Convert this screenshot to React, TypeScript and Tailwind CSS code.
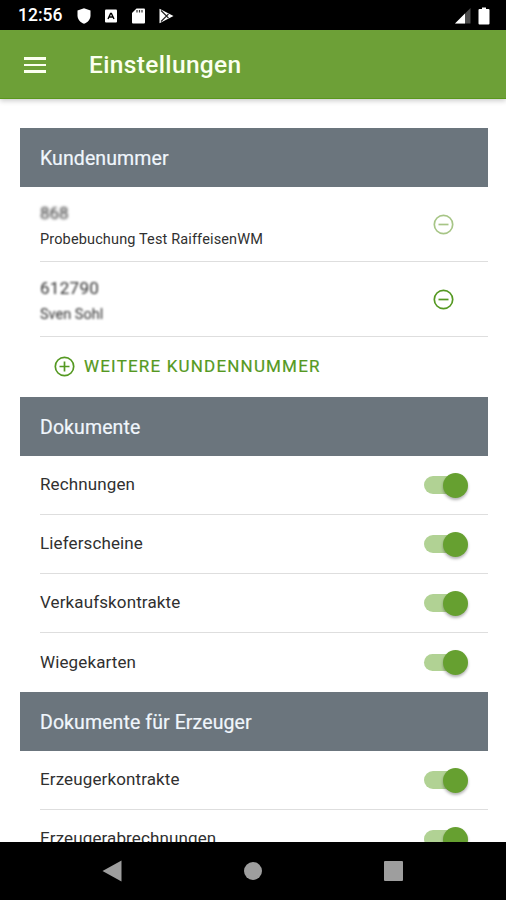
import { useState } from "react";

const DOCUMENTS = ["Rechnungen", "Lieferscheine", "Verkaufskontrakte", "Wiegekarten"];
const PRODUCER_DOCUMENTS = ["Erzeugerkontrakte", "Erzeugerabrechnungen"];

export default function App() {
    return (
        <div className="flex h-[900px] w-[506px] flex-col overflow-hidden bg-white font-['Roboto',sans-serif] text-[#303030]">
            <StatusBar />

            <header className="z-10 flex h-[69px] shrink-0 items-center bg-[#6da037] pt-[2px] pl-[23.5px] text-[#fbfff0] shadow-[inset_0_-1px_0_#5a971c,0_2px_5px_rgba(0,0,0,0.2)]">
                <button aria-label="Menu" className="flex w-[22.5px] flex-col gap-[4px]">
                    <span className="h-[2.5px] w-full bg-current" />
                    <span className="h-[2.5px] w-full bg-current" />
                    <span className="h-[2.5px] w-full bg-current" />
                </button>
                <h1 className="ml-[43px] text-[24.5px] leading-none font-medium tracking-[0.35px]">Einstellungen</h1>
            </header>

            <main className="min-h-0 flex-1 overflow-hidden pt-[29.5px] pr-[18px] pl-5">
                <SectionTitle title="Kundenummer" />
                <div className="ml-5 flex h-[75px] items-center justify-between border-b border-[#dedede] pt-px pr-[34px]">
                    <div className="pt-[3px]">
                        <p className="text-[17px] leading-[26px] blur-[1.4px]">868</p>
                        <p className="mt-px text-[14.5px] leading-[26px] tracking-[0.14px]">Probebuchung Test RaiffeisenWM</p>
                    </div>
                    <CircleIcon className="text-[#6da037] opacity-60" />
                </div>
                <div className="ml-5 flex h-[75px] items-center justify-between border-b border-[#dedede] pt-px pr-[34px]">
                    <div className="pt-[3px]">
                        <p className="text-[17px] leading-[26px] tracking-[0.3px] blur-[1px]">612790</p>
                        <p className="mt-px text-[14.5px] leading-[26px] blur-[1.2px]">Sven Sohl</p>
                    </div>
                    <CircleIcon className="text-[#559922]" />
                </div>
                <button className="ml-[34px] flex h-[59.5px] items-center gap-[9px] text-[#559922]">
                    <CircleIcon plus />
                    <span className="text-[17px] tracking-[1.18px] [-webkit-text-stroke:0.2px]">WEITERE KUNDENNUMMER</span>
                </button>

                <SectionTitle title="Dokumente" />
                {DOCUMENTS.map((label, i) => (
                    <ToggleRow key={label} label={label} last={i === DOCUMENTS.length - 1} />
                ))}

                <SectionTitle title="Dokumente für Erzeuger" />
                {PRODUCER_DOCUMENTS.map((label) => (
                    <ToggleRow key={label} label={label} />
                ))}
            </main>

            <nav className="flex h-[58px] shrink-0 items-center bg-black pl-[102px] text-[#9e9e9e]">
                <svg width="20" height="22" viewBox="0 0 20 22" fill="currentColor">
                    <path d="M0.5 11 19.5 0.5V21.5Z" />
                </svg>
                <span className="ml-[122px] size-[18px] rounded-full bg-current" />
                <span className="ml-[121.5px] size-[19.5px] rounded-[1px] bg-current" />
            </nav>
        </div>
    );
}

function StatusBar() {
    return (
        <div className="flex h-[29.5px] shrink-0 items-center bg-black pt-[2px] pr-[16px] pl-[18px] text-white">
            <span className="w-[44px] text-[17.5px] leading-none font-medium whitespace-nowrap">12:56</span>
            <svg className="ml-[15px]" width="14" height="16" viewBox="0 0 14 16" fill="currentColor">
                <path d="M7 0.3 13.5 2.5V7.5C13.5 11.5 10.5 14.5 7 15.7 3.5 14.5 0.5 11.5 0.5 7.5V2.5Z" />
            </svg>
            <svg className="ml-[14px]" width="12" height="14" viewBox="0 0 12 14">
                <rect y="0.5" width="12" height="13" rx="1" fill="#fff" />
                <path d="M3 10 5.6 4.5H6.4L9 10M4.2 8H7.8" fill="none" stroke="#000" strokeWidth="1.4" />
            </svg>
            <svg className="ml-[15px]" width="13" height="16" viewBox="0 0 13 16">
                <path d="M4.5 0.5H12A1 1 0 0 1 13 1.5V14.5A1 1 0 0 1 12 15.5H1A1 1 0 0 1 0 14.5V5Z" fill="#fff" />
                <path d="M5 2V4.5M7.5 2V4.5M10 2V4.5" stroke="#333" strokeWidth="1.2" />
            </svg>
            <svg className="ml-[14px]" width="15" height="16" viewBox="0 0 15 16">
                <path d="M0.5 0.8V15.2L14.5 8Z" fill="#fff" />
                <path d="M2 2.5 9.5 10M2 13.5 9.5 6" stroke="#222" strokeWidth="1.1" />
            </svg>
            <svg className="ml-auto" width="16" height="16" viewBox="0 0 16 16">
                <path d="M0 15.5 15.5 0V15.5Z" fill="#4d4d4d" />
                <path d="M0 15.5 10 5.5V15.5Z" fill="#fff" />
            </svg>
            <svg className="ml-[7px]" width="12" height="18" viewBox="0 0 12 18" fill="currentColor">
                <path d="M4 0.5H8V2H10.5Q11.5 2 11.5 3V16.5Q11.5 17.5 10.5 17.5H1.5Q0.5 17.5 0.5 16.5V3Q0.5 2 1.5 2H4Z" />
            </svg>
        </div>
    );
}

function SectionTitle({ title }: { title: string }) {
    return (
        <h2 className="flex h-[59px] items-center bg-[#6b757d] pt-[3px] pl-5 text-[19.5px] leading-none tracking-[0.1px] text-[#f0f6fc] [-webkit-text-stroke:0.2px]">
            {title}
        </h2>
    );
}

function CircleIcon({ plus = false, className = "" }: { plus?: boolean; className?: string }) {
    return (
        <svg className={className} width="21" height="21" viewBox="0 0 21 21" fill="none" stroke="currentColor" strokeWidth="1.7">
            <circle cx="10.5" cy="10.5" r="9.2" />
            <path d={plus ? "M5.5 10.5H15.5M10.5 5.5V15.5" : "M5.5 10.5H15.5"} />
        </svg>
    );
}

function ToggleRow({ label, last = false }: { label: string; last?: boolean }) {
    const [on, setOn] = useState(true);

    return (
        <div className={`ml-5 flex h-[59px] items-center justify-between pr-5 ${last ? "" : "border-b border-[#dedede]"}`}>
            <span className="text-[17px] leading-none tracking-[0.12px]">{label}</span>
            <button
                role="switch"
                aria-checked={on}
                aria-label={label}
                onClick={() => setOn(!on)}
                className={`mt-px mr-[2px] flex h-[17.5px] w-[42px] items-center rounded-full ${on ? "justify-end bg-[#b1d294]" : "bg-gray-300"}`}
            >
                <span className={`-mr-[2px] size-[25px] shrink-0 rounded-full shadow-[0_2px_3px_rgba(0,0,0,0.3)] ${on ? "bg-[#66a030]" : "bg-white"}`} />
            </button>
        </div>
    );
}
